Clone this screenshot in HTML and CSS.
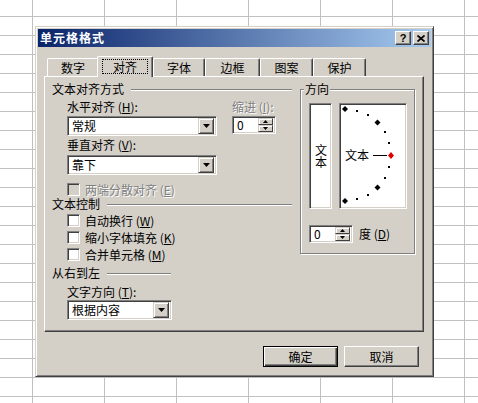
FILE: index.html
```html
<!DOCTYPE html>
<html lang="zh-CN">
<head>
<meta charset="utf-8">
<title>单元格格式</title>
<link rel="stylesheet" href="styles.css">
</head>
<body>
<div class="dialog">
  <div class="titlebar">
    <span class="title">单元格格式</span>
    <div class="caption-buttons">
      <span class="cap-btn help">?</span>
      <span class="cap-btn close"><svg width="8" height="7" viewBox="0 0 8 7"><path d="M0.5 0.5 L7.5 6.5 M7.5 0.5 L0.5 6.5" stroke="#000" stroke-width="1.7" fill="none"/></svg></span>
    </div>
  </div>

  <div class="tabs">
    <div class="tab w52">数字</div>
    <div class="tab w56 active"><span class="focus">对齐</span></div>
    <div class="tab w52">字体</div>
    <div class="tab w55">边框</div>
    <div class="tab w53">图案</div>
    <div class="tab w53">保护</div>
  </div>

  <div class="panel">
    <div class="left-col">
      <div class="group-head"><span>文本对齐方式</span><i class="etch"></i></div>

      <div class="align-row indent mt6">
        <div class="field-col">
          <div class="label">水平对齐 (<u>H</u>):</div>
          <div class="combo combo-wide mt3"><span class="value">常规</span><span class="drop"><svg width="7" height="4" viewBox="0 0 7 4"><polygon points="0,0 7,0 3.5,4" fill="#000"/></svg></span></div>
          <div class="label mt3">垂直对齐 (<u>V</u>):</div>
          <div class="combo combo-wide mt4"><span class="value">靠下</span><span class="drop"><svg width="7" height="4" viewBox="0 0 7 4"><polygon points="0,0 7,0 3.5,4" fill="#000"/></svg></span></div>
        </div>
        <div class="indent-col">
          <div class="label disabled">缩进 (<u>I</u>):</div>
          <div class="spin mt3">
            <span class="value">0</span>
            <span class="spin-btns">
              <span class="sb"><svg width="5" height="3" viewBox="0 0 5 3"><polygon points="2.5,0 5,3 0,3" fill="#000"/></svg></span>
              <span class="sb"><svg width="5" height="3" viewBox="0 0 5 3"><polygon points="0,0 5,0 2.5,3" fill="#000"/></svg></span>
            </span>
          </div>
        </div>
      </div>

      <div class="check indent mt8"><span class="cb cb-disabled"></span><span class="disabled">两端分散对齐 (<u>E</u>)</span></div>

      <div class="group-head mt2"><span>文本控制</span><i class="etch"></i></div>
      <div class="check indent mt4"><span class="cb"></span><span>自动换行 (<u>W</u>)</span></div>
      <div class="check indent mt4"><span class="cb"></span><span>缩小字体填充 (<u>K</u>)</span></div>
      <div class="check indent mt4"><span class="cb"></span><span>合并单元格 (<u>M</u>)</span></div>

      <div class="group-head mt6"><span>从右到左</span><i class="etch etch-short"></i></div>
      <div class="label indent mt7">文字方向 (<u>T</u>):</div>
      <div class="combo combo-narrow indent mt2"><span class="value">根据内容</span><span class="drop"><svg width="7" height="4" viewBox="0 0 7 4"><polygon points="0,0 7,0 3.5,4" fill="#000"/></svg></span></div>
    </div>

    <div class="orient">
      <span class="legend">方向</span>
      <div class="orient-boxes">
        <div class="vbox"><span class="vtext">文本</span></div>
        <div class="dial">
          <svg width="64" height="102" viewBox="0 0 64 102">
            <polygon points="4,1 7,4 4,7 1,4" fill="#000"/>
            <rect x="15" y="5" width="2" height="2" fill="#000"/>
            <rect x="26" y="9" width="2" height="2" fill="#000"/>
            <polygon points="36.5,14.5 39.5,17.5 36.5,20.5 33.5,17.5" fill="#000"/>
            <rect x="43" y="26" width="2" height="2" fill="#000"/>
            <rect x="47" y="37" width="2" height="2" fill="#000"/>
            <text x="4" y="55" font-size="12" font-family="Noto Sans CJK SC, sans-serif" fill="#000">文本</text>
            <rect x="32" y="50" width="14" height="1" fill="#000"/>
            <polygon points="50,47 53,50.5 50,54 47,50.5" fill="#e00000"/>
            <rect x="47" y="61" width="2" height="2" fill="#000"/>
            <rect x="43" y="72" width="2" height="2" fill="#000"/>
            <polygon points="36.5,79.5 39.5,82.5 36.5,85.5 33.5,82.5" fill="#000"/>
            <rect x="26" y="89" width="2" height="2" fill="#000"/>
            <rect x="15" y="93" width="2" height="2" fill="#000"/>
            <polygon points="4,93 7,96 4,99 1,96" fill="#000"/>
          </svg>
        </div>
      </div>
      <div class="degree-row">
        <div class="spin">
          <span class="value">0</span>
          <span class="spin-btns">
            <span class="sb"><svg width="5" height="3" viewBox="0 0 5 3"><polygon points="2.5,0 5,3 0,3" fill="#000"/></svg></span>
            <span class="sb"><svg width="5" height="3" viewBox="0 0 5 3"><polygon points="0,0 5,0 2.5,3" fill="#000"/></svg></span>
          </span>
        </div>
        <span class="degree-label">度 (<u>D</u>)</span>
      </div>
    </div>
  </div>

  <div class="actions">
    <button class="btn btn-default" type="button">确定</button>
    <button class="btn" type="button">取消</button>
  </div>
</div>
</body>
</html>
```

FILE: styles.css
```css
* { box-sizing: border-box; }

html, body { margin: 0; padding: 0; }

body {
  width: 478px;
  height: 403px;
  overflow: hidden;
  position: relative;
  background-color: #fff;
  background-image:
    linear-gradient(to right, #c0c0c0 1px, transparent 1px),
    linear-gradient(to bottom, #c0c0c0 1px, transparent 1px);
  background-size: 72px 19px, 72px 19px;
  background-position: 32px 0, 0 16px;
  font: 12px/12px "Noto Sans CJK SC", "Noto Sans", sans-serif;
  color: #000;
}

/* ---------- window ---------- */
.dialog {
  position: absolute;
  left: 35px;
  top: 26px;
  width: 399px;
  height: 351px;
  padding: 2px;
  background: #d4d0c8;
  border: 1px solid;
  border-color: #d4d0c8 #404040 #404040 #d4d0c8;
  box-shadow: inset 1px 1px 0 #fff, inset -1px -1px 0 #808080;
  display: flex;
  flex-direction: column;
}

.titlebar {
  flex: none;
  height: 18px;
  display: flex;
  align-items: center;
  padding: 0 2px;
  background: linear-gradient(to right, #0a246a, #a6caf0);
}

.title {
  color: #fff;
  font-weight: bold;
  letter-spacing: 1px;
}

.caption-buttons {
  margin-left: auto;
  display: flex;
  gap: 2px;
}

.cap-btn {
  width: 16px;
  height: 14px;
  background: #d4d0c8;
  border: 1px solid;
  border-color: #fff #404040 #404040 #fff;
  box-shadow: inset -1px -1px 0 #808080;
  display: flex;
  align-items: center;
  justify-content: center;
}

.help {
  font: bold 11px/1 "Liberation Sans", sans-serif;
  padding-top: 1px;
}

/* ---------- tabs ---------- */
.tabs {
  flex: none;
  height: 20px;
  margin-top: 9px;
  padding-left: 9px;
  display: flex;
  align-items: flex-end;
  position: relative;
  z-index: 1;
}

.tab {
  height: 18px;
  background: #d4d0c8;
  border: 1px solid;
  border-bottom: 0;
  border-color: #fff #404040 #fff #fff;
  border-radius: 2px 2px 0 0;
  box-shadow: inset -1px 0 0 #808080;
  display: flex;
  align-items: center;
  justify-content: center;
}

.w52 { width: 52px; }
.w53 { width: 53px; }
.w55 { width: 55px; }
.w56 { width: 56px; }

.tab.active {
  height: 21px;
  margin: 0 0 -1px -2px;
  padding-bottom: 2px;
  position: relative;
  z-index: 2;
}

.focus {
  border: 1px dotted #000;
  padding: 0 10px;
  height: 15px;
  line-height: 13px;
}

/* ---------- panel ---------- */
.panel {
  flex: none;
  margin-left: 6px;
  width: 380px;
  height: 256px;
  border: 1px solid;
  border-color: #fff #404040 #404040 #fff;
  box-shadow: inset -1px -1px 0 #808080;
  display: flex;
  align-items: flex-start;
}

.left-col {
  width: 247px;
  padding: 6px 0 0 7px;
  display: flex;
  flex-direction: column;
}

.group-head {
  height: 12px;
  display: flex;
  align-items: center;
}

.etch {
  flex: 1;
  height: 2px;
  margin: 1px 0 0 7px;
  border-top: 1px solid #808080;
  border-bottom: 1px solid #fff;
}

.etch-short {
  flex: none;
  width: 64px;
}

.indent { margin-left: 15px; }

.mt2 { margin-top: 2px; }
.mt3 { margin-top: 3px; }
.mt4 { margin-top: 4px; }
.mt6 { margin-top: 6px; }
.mt7 { margin-top: 7px; }
.mt8 { margin-top: 8px; }

.label {
  height: 12px;
  line-height: 12px;
  white-space: nowrap;
}

.disabled {
  color: #808080;
  text-shadow: 1px 1px 0 #fff;
}

.align-row {
  display: flex;
  align-items: flex-start;
}

.field-col {
  width: 150px;
  display: flex;
  flex-direction: column;
}

.indent-col {
  margin-left: 15px;
  display: flex;
  flex-direction: column;
}

/* sunken fields */
.combo,
.spin {
  height: 20px;
  background: #fff;
  border: 1px solid;
  border-color: #808080 #fff #fff #808080;
  box-shadow: inset 1px 1px 0 #404040, inset -1px -1px 0 #d4d0c8;
  padding: 2px;
  display: flex;
  align-items: center;
}

.combo-wide { width: 150px; }
.combo-narrow { width: 105px; }

.value {
  flex: 1;
  padding-left: 2px;
  line-height: 12px;
  white-space: nowrap;
}

.drop {
  flex: none;
  width: 16px;
  height: 16px;
  background: #d4d0c8;
  border: 1px solid;
  border-color: #d4d0c8 #404040 #404040 #d4d0c8;
  box-shadow: inset 1px 1px 0 #fff, inset -1px -1px 0 #808080;
  display: flex;
  align-items: center;
  justify-content: center;
}

.spin {
  width: 44px;
  height: 18px;
}

.spin-btns {
  flex: none;
  width: 15px;
  height: 14px;
  display: flex;
  flex-direction: column;
}

.sb {
  flex: 1;
  background: #d4d0c8;
  border: 1px solid;
  border-color: #d4d0c8 #404040 #404040 #d4d0c8;
  box-shadow: inset 1px 1px 0 #fff;
  display: flex;
  align-items: center;
  justify-content: center;
}

/* checkboxes */
.check {
  height: 13px;
  display: flex;
  align-items: center;
  white-space: nowrap;
}

.cb {
  flex: none;
  width: 13px;
  height: 13px;
  margin-right: 5px;
  background: #fff;
  border: 1px solid;
  border-color: #808080 #fff #fff #808080;
  box-shadow: inset 1px 1px 0 #404040, inset -1px -1px 0 #d4d0c8;
}

.cb-disabled { background: #d4d0c8; }

/* ---------- orientation group ---------- */
.orient {
  position: relative;
  margin: 12px 0 0 8px;
  width: 115px;
  height: 165px;
  border: 1px solid #808080;
  box-shadow: inset 1px 1px 0 #fff, 1px 1px 0 #fff;
  padding: 13px 0 0 8px;
}

.legend {
  position: absolute;
  top: -7px;
  left: 3px;
  padding: 0 1px;
  line-height: 12px;
  background: #d4d0c8;
}

.orient-boxes {
  display: flex;
  gap: 7px;
}

.vbox,
.dial {
  height: 106px;
  background: #fff;
  border: 1px solid;
  border-color: #808080 #fff #fff #808080;
  box-shadow: inset 1px 1px 0 #404040, inset -1px -1px 0 #d4d0c8;
}

.vbox {
  width: 23px;
  display: flex;
  align-items: center;
  justify-content: center;
}

.vtext {
  writing-mode: vertical-rl;
  text-orientation: upright;
  line-height: 12px;
}

.dial {
  width: 68px;
  padding: 1px;
}

.dial svg { display: block; }

.degree-row {
  margin-top: 16px;
  display: flex;
  align-items: center;
}

.degree-label {
  margin-left: 6px;
  white-space: nowrap;
}

/* ---------- buttons ---------- */
.actions {
  flex: none;
  margin-top: 14px;
  padding-right: 12px;
  display: flex;
  justify-content: flex-end;
  gap: 6px;
}

.btn {
  width: 75px;
  height: 21px;
  margin: 0;
  padding: 0;
  font: inherit;
  line-height: 12px;
  color: #000;
  background: #d4d0c8;
  border: 1px solid;
  border-color: #fff #404040 #404040 #fff;
  border-radius: 0;
  box-shadow: inset -1px -1px 0 #808080;
}

.btn-default {
  border-color: #000;
  box-shadow: inset 1px 1px 0 #fff, inset -1px -1px 0 #404040, inset -2px -2px 0 #808080;
}
```
